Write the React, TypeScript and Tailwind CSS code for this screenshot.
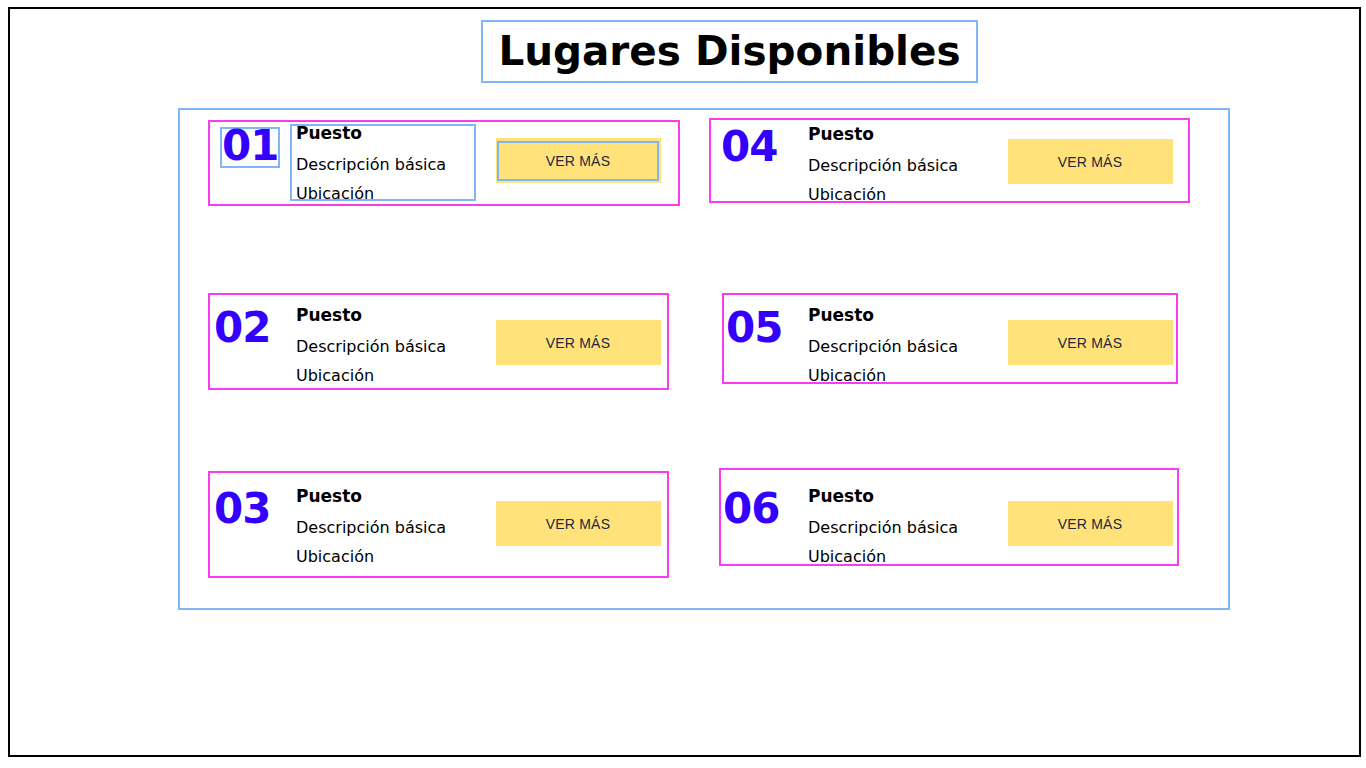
import React from "react";

type Card = {
  num: string;
  ml: number;
  mt: number;
  w: number;
  h: number;
  pt: number;
  col1: number;
  numPl: number;
  highlight?: boolean;
};

const body = { fontFamily: '"DejaVu Sans", "Noto Sans", sans-serif' };
const btnFont = { fontFamily: '"Liberation Sans", Arial, sans-serif' };

function CardView({ c }: { c: Card }) {
  const hl = c.highlight;
  return (
    <div
      className="shrink-0 border-2 border-[#fb3bef] flex items-start"
      style={{ marginLeft: c.ml, marginTop: c.mt, width: c.w, height: c.h, paddingTop: c.pt }}
    >
      <div className="shrink-0" style={{ width: c.col1, paddingLeft: c.numPl }}>
        <div
          className={`inline-block mt-[3px] h-[41px] border-2 ${hl ? "border-[#80b6f6]" : "border-transparent"} text-[42px] leading-[34px] font-bold text-[#3300ff] whitespace-nowrap tracking-[-1px]`}
          style={body}
        >
          {c.num}
        </div>
      </div>
      <div
        className={`shrink-0 w-[186px] ${hl ? "h-[77px]" : ""} border-2 ${hl ? "border-[#80b6f6]" : "border-transparent"} pl-[4px] text-black whitespace-nowrap`}
        style={body}
      >
        <div className="text-[17px] leading-[14px] font-bold">Puesto</div>
        <div className="mt-[10px] text-[16px] leading-[29px]">Descripción básica</div>
        <div className="text-[16px] leading-[29px]">Ubicación</div>
      </div>
      <div className="shrink-0 ml-[20px] mt-[14px] w-[165px] h-[45px] bg-[#ffe27a] pl-[1px] pr-[2px] pt-[3px] pb-[2px]">
        <div
          className={`w-full h-full border-2 ${hl ? "border-[#80b6f6]" : "border-transparent"} flex items-center justify-center text-[14px] text-[#222842] tracking-[0.2px]`}
          style={btnFont}
        >
          VER MÁS
        </div>
      </div>
    </div>
  );
}

const row1: Card[] = [
  { num: "01", ml: 28, mt: 2, w: 472, h: 86, pt: 2, col1: 80, numPl: 10, highlight: true },
  { num: "04", ml: 29, mt: 0, w: 481, h: 85, pt: 5, col1: 91, numPl: 8 },
];
const row2: Card[] = [
  { num: "02", ml: 28, mt: 0, w: 461, h: 97, pt: 11, col1: 80, numPl: 2 },
  { num: "05", ml: 53, mt: 0, w: 456, h: 91, pt: 11, col1: 78, numPl: 0 },
];
const row3: Card[] = [
  { num: "03", ml: 28, mt: 3, w: 461, h: 107, pt: 14, col1: 80, numPl: 2 },
  { num: "06", ml: 50, mt: 0, w: 460, h: 98, pt: 17, col1: 81, numPl: 0 },
];

export default function App() {
  return (
    <div className="w-[1366px] h-[768px] bg-white overflow-hidden pt-[7px] pl-[8px]">
      <div className="w-[1353px] h-[750px] border-2 border-black flex flex-col">
        <div
          className="mt-[11px] ml-[471px] w-[497px] h-[63px] border-2 border-[#80b6f6] flex items-center justify-center text-[40.5px] font-bold text-black whitespace-nowrap"
          style={body}
        >
          Lugares Disponibles
        </div>
        <div className="mt-[25px] ml-[168px] w-[1052px] h-[502px] border-2 border-[#80b6f6] flex flex-col">
          <div className="mt-[8px] flex items-start">
            {row1.map((c) => (
              <CardView key={c.num} c={c} />
            ))}
          </div>
          <div className="mt-[87px] flex items-start">
            {row2.map((c) => (
              <CardView key={c.num} c={c} />
            ))}
          </div>
          <div className="mt-[78px] flex items-start">
            {row3.map((c) => (
              <CardView key={c.num} c={c} />
            ))}
          </div>
        </div>
      </div>
    </div>
  );
}
